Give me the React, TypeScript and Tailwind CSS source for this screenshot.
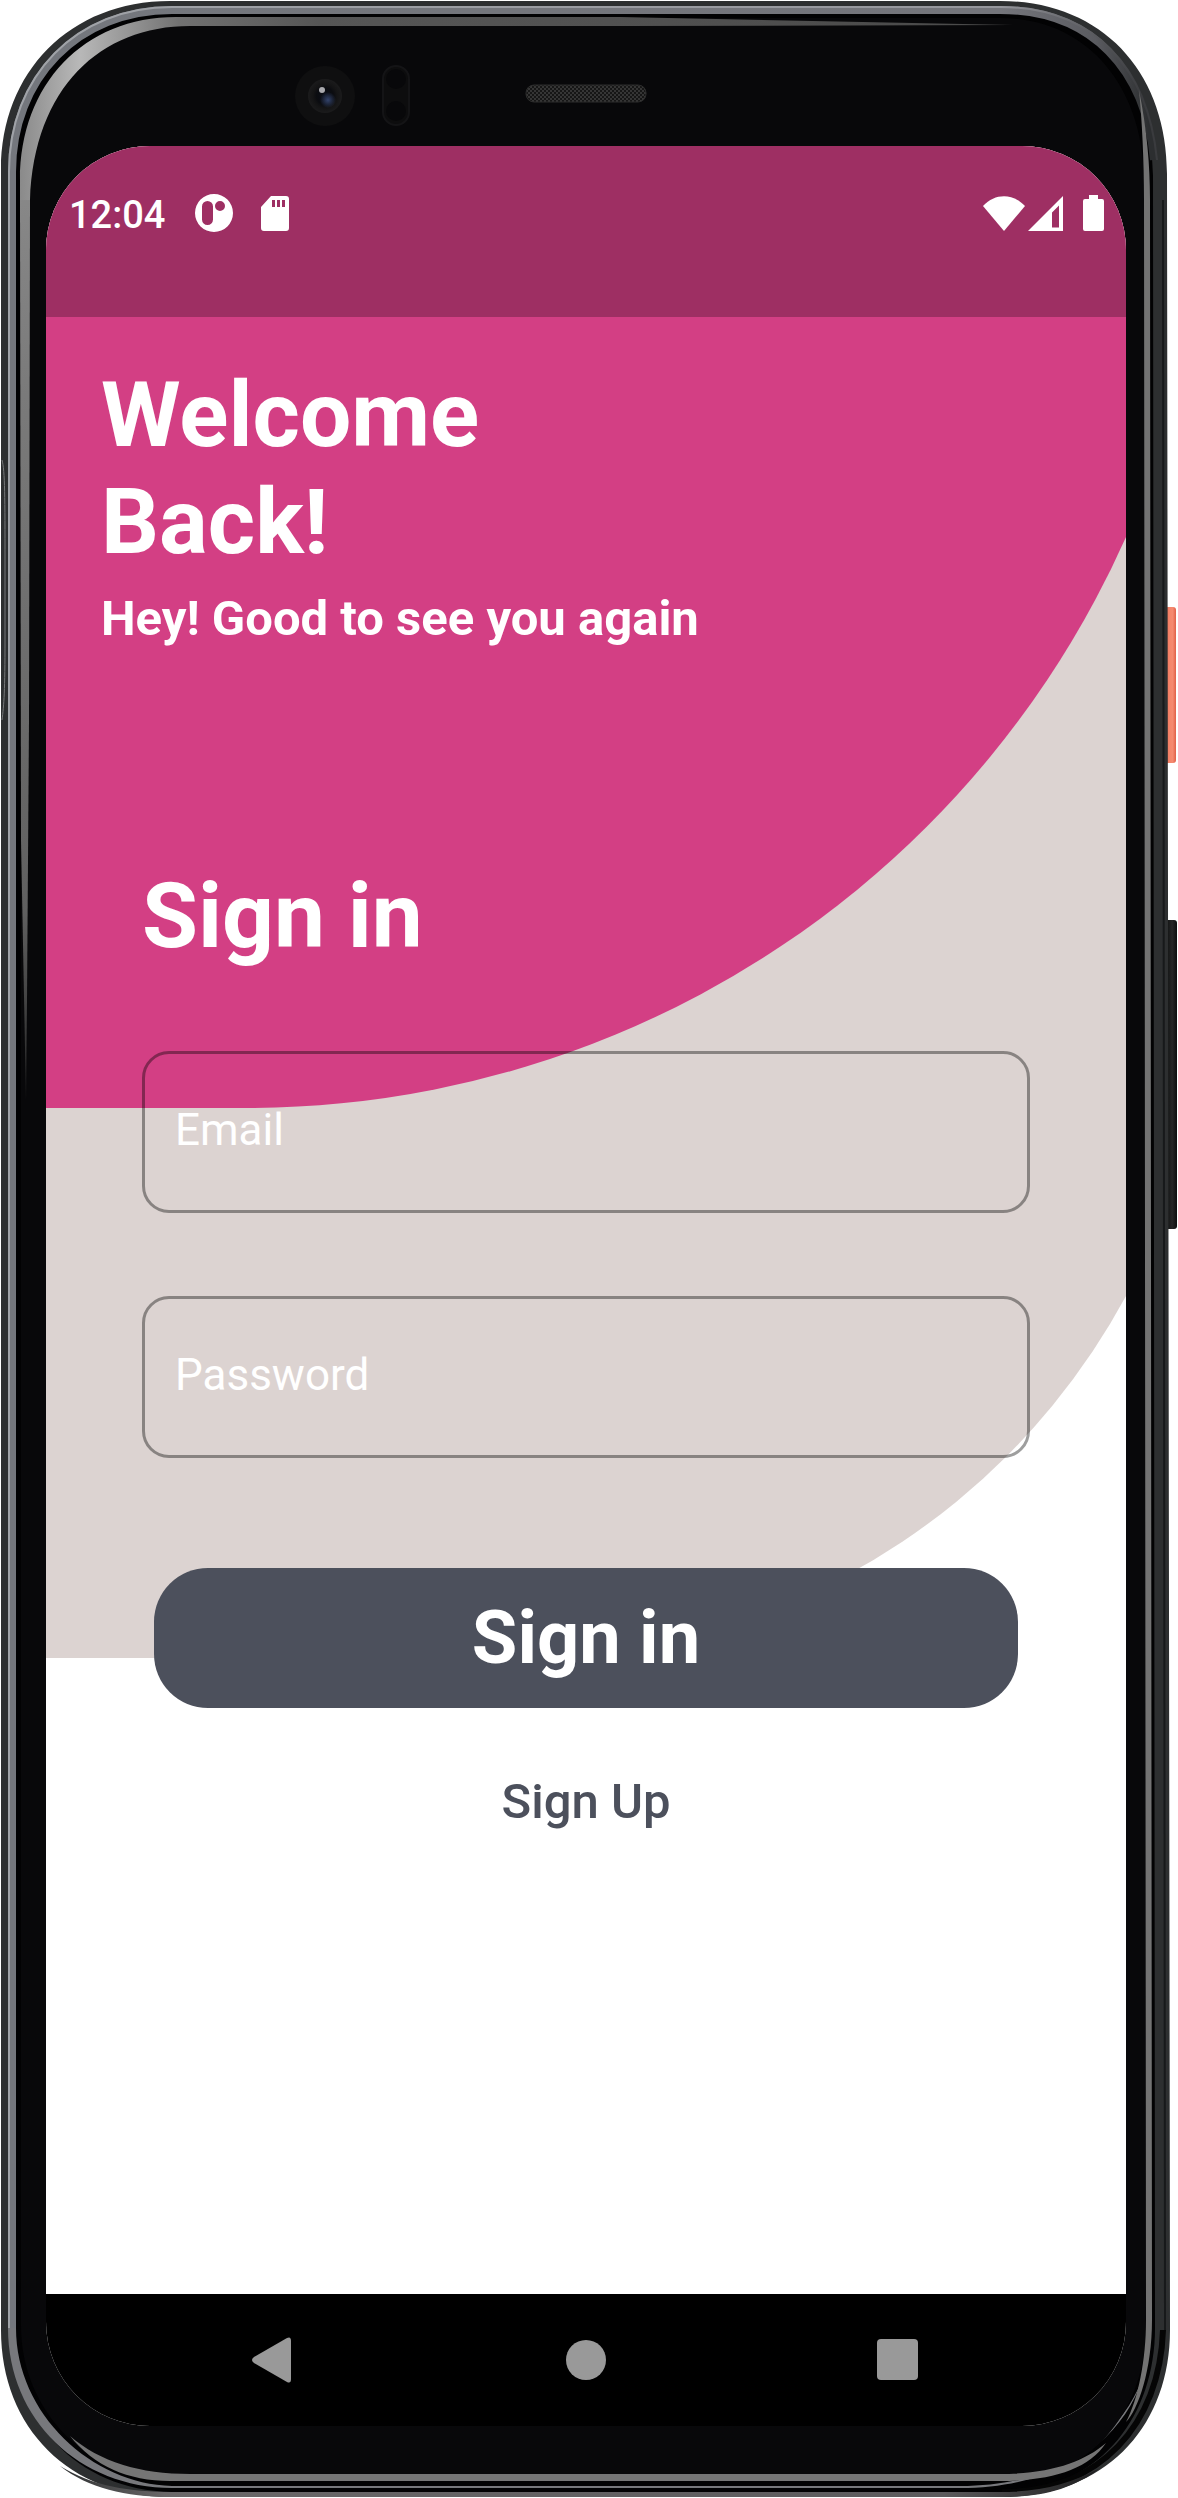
import type { ReactNode } from "react";

/** Hardware shell of the handset: rim, highlights, camera, speaker and side keys. */
function PhoneShell() {
  return (
    <svg
      className="absolute inset-0 h-full w-full"
      viewBox="0 0 1178 2498"
      preserveAspectRatio="none"
      aria-hidden="true"
    >
      <defs>
        <linearGradient id="coral" x1="0" x2="1" y1="0" y2="0">
          <stop offset="0" stopColor="#e9664d" />
          <stop offset="0.35" stopColor="#f58368" />
          <stop offset="0.7" stopColor="#f58a70" />
          <stop offset="1" stopColor="#e06048" />
        </linearGradient>
        <linearGradient id="silver" gradientUnits="userSpaceOnUse" x1="0" x2="1178" y1="0" y2="0">
          <stop offset="0" stopColor="#74777d" />
          <stop offset="0.85" stopColor="#74757b" />
          <stop offset="0.93" stopColor="#5a5b60" />
          <stop offset="0.975" stopColor="#2c2e30" />
        </linearGradient>
        <linearGradient id="silverEdge" gradientUnits="userSpaceOnUse" x1="0" x2="1178" y1="0" y2="0">
          <stop offset="0" stopColor="#a0a3a8" />
          <stop offset="0.85" stopColor="#96979d" />
          <stop offset="0.97" stopColor="#3a3b3e" />
        </linearGradient>
        <linearGradient id="topGlow" gradientUnits="userSpaceOnUse" x1="20" x2="1013" y1="0" y2="0">
          <stop offset="0" stopColor="#8a8a8a" />
          <stop offset="0.06" stopColor="#b8b8b8" />
          <stop offset="0.16" stopColor="#727272" />
          <stop offset="0.3" stopColor="#565656" />
          <stop offset="1" stopColor="#4a4a4a" />
        </linearGradient>
        <linearGradient id="sideGlow" gradientUnits="userSpaceOnUse" x1="0" x2="0" y1="160" y2="1100">
          <stop offset="0" stopColor="#8a8a8a" />
          <stop offset="0.25" stopColor="#7a7a7a" />
          <stop offset="0.8" stopColor="#606060" />
          <stop offset="1" stopColor="#222" />
        </linearGradient>
        <linearGradient id="bottomEdge" gradientUnits="userSpaceOnUse" x1="60" x2="1100" y1="0" y2="0">
          <stop offset="0" stopColor="#2d2f30" />
          <stop offset="0.1" stopColor="#6a6869" />
          <stop offset="0.85" stopColor="#5c5b5d" />
          <stop offset="1" stopColor="#1c1c1d" />
        </linearGradient>
        <linearGradient id="key" x1="0" x2="1" y1="0" y2="0">
          <stop offset="0" stopColor="#0c0d0d" />
          <stop offset="0.6" stopColor="#252626" />
          <stop offset="1" stopColor="#0d0e0e" />
        </linearGradient>
        <radialGradient id="lens" cx="0.5" cy="0.5" r="0.5">
          <stop offset="0" stopColor="#0a0e18" />
          <stop offset="0.5" stopColor="#0b0c10" />
          <stop offset="0.7" stopColor="#141415" />
          <stop offset="1" stopColor="#1b1b1c" />
        </radialGradient>
        <radialGradient id="glint" cx="0.5" cy="0.5" r="0.5">
          <stop offset="0" stopColor="#33436b" />
          <stop offset="1" stopColor="#33436b" stopOpacity="0" />
        </radialGradient>
        <pattern id="mesh" width="4" height="4" patternUnits="userSpaceOnUse">
          <rect width="4" height="4" fill="#161616" />
          <circle cx="1" cy="1" r="1" fill="#3f3f3f" />
          <circle cx="3" cy="3" r="1" fill="#3f3f3f" />
        </pattern>
      </defs>

      {/* side keys */}
      <rect x="1165" y="607" width="11" height="156" rx="3" fill="url(#coral)" />
      <rect x="1165" y="920" width="12" height="309" rx="3" fill="url(#key)" />

      {/* body */}
      <path
        d="M170 1H1000C1102 1 1167 72 1167 174L1170 2330C1170 2428 1104 2497 1002 2497H170C70 2497 1 2428 1 2330V170C1 72 70 1 170 1Z"
        fill="#2d2f30"
      />
      <path
        d="M172 10H1000C1096 10 1153 80 1153 176L1155 2328C1155 2420 1096 2492 1002 2492H172C76 2490 13 2420 13 2328V172C13 78 78 10 172 10Z"
        fill="#020203"
      />
      <path d="M1163 2330C1160 2424 1100 2492 1002 2492" fill="none" stroke="#050505" strokeWidth="6" />
      <path
        d="M60 2466C92 2486 130 2492 172 2492H1000C1040 2492 1070 2484 1100 2468C1072 2490 1040 2497 1002 2497H170C126 2497 88 2488 60 2466Z"
        fill="url(#bottomEdge)"
      />
      <path d="M1163 200L1165 2330" stroke="#17191a" strokeWidth="2" />

      {/* polished rim */}
      <path
        d="M12 2328V172C12 78 78 10 172 10H1000C1092 10 1146 70 1154 160"
        fill="none"
        stroke="url(#silver)"
        strokeWidth="8"
      />
      <path
        d="M9 2328V172C9 76 76 7 172 7H1000C1094 7 1148 68 1157 160"
        fill="none"
        stroke="url(#silverEdge)"
        strokeWidth="2"
      />
      <path
        d="M8 2328C8 2420 80 2488 172 2488H960C1060 2488 1122 2440 1142 2380C1118 2440 1056 2486 960 2486H172C92 2484 16 2414 16 2328Z"
        fill="#77787c"
      />

      {/* glass */}
      <path
        d="M176 18H1000C1090 18 1144 90 1144 180L1146 2326C1146 2412 1090 2481 1002 2481H176C90 2481 21 2412 21 2326V176C21 86 86 18 176 18Z"
        fill="#08080a"
      />

      {/* glass edge reflections */}
      <path
        d="M20 200V180C20 84 84 17 176 17H620L1013 25L620 26H190C100 26 34 88 30 200Z"
        fill="url(#topGlow)"
      />
      <path d="M20 200H30L29 720L27 1000L26 1100L21 840Z" fill="url(#sideGlow)" />
      <path
        d="M1139 90C1147 130 1150 165 1150 200L1152 2320C1152 2370 1138 2410 1126 2422C1138 2400 1146 2360 1146 2320L1144 200C1144 160 1142 120 1139 90Z"
        fill="#737373"
      />
      <path
        d="M70 2436C100 2462 140 2474 190 2474H1000C1050 2474 1084 2462 1106 2443C1088 2470 1050 2481 1000 2481H170C128 2481 94 2466 70 2436Z"
        fill="#757575"
      />
      <path d="M2 460C5 470 5 500 5 560V640C5 690 4 705 2 720" fill="none" stroke="#77797a" strokeWidth="1" />

      {/* front camera */}
      <circle cx="325" cy="96" r="30" fill="#0f0f10" />
      <circle cx="325" cy="96" r="17" fill="url(#lens)" />
      <circle cx="328" cy="100" r="8" fill="url(#glint)" />
      <circle cx="322" cy="90" r="3" fill="#a9a9ad" />

      {/* proximity sensors */}
      <rect x="383" y="66" width="26" height="59" rx="13" fill="#0d0d0e" stroke="#141416" strokeWidth="2" />
      <circle cx="396" cy="79" r="10" fill="#08080a" />
      <circle cx="396" cy="111" r="10" fill="#08080a" />

      {/* earpiece */}
      <rect x="526" y="85" width="120" height="17" rx="8" fill="url(#mesh)" stroke="#2c2c2c" strokeWidth="1" />
    </svg>
  );
}

function StatusBar() {
  return (
    <div className="flex h-[171px] items-start justify-between bg-black/25 pl-[23px] pr-[22px] pt-[47px] text-white">
      <div className="flex h-10 items-center">
        <span className="mt-1 text-[38px] font-medium leading-10">12:04</span>
        <svg className="ml-[30px] h-[38px] w-[38px]" viewBox="0 0 38 38" aria-hidden="true">
          <path
            fillRule="evenodd"
            fill="currentColor"
            d="M19 0a19 19 0 1 1 0 38a19 19 0 0 1 0-38ZM12.500 7a5.500 5.500 0 0 0-5.500 5.500v13a5.500 5.500 0 0 0 11 0v-13a5.500 5.500 0 0 0-5.500-5.500ZM25 7a5 5 0 1 0 0 10a5 5 0 0 0 0-10Z"
          />
        </svg>
        <svg className="ml-7 h-[35px] w-[28px]" viewBox="0 0 28 35" aria-hidden="true">
          <path
            fillRule="evenodd"
            fill="currentColor"
            d="M10 0H25a3 3 0 0 1 3 3V32a3 3 0 0 1-3 3H3a3 3 0 0 1-3-3V11ZM11 4V11H14V4ZM16 4V11H19V4ZM21 4V11H24V4Z"
          />
        </svg>
      </div>
      <div className="flex h-10 items-center">
        <svg className="h-[35px] w-[42px]" viewBox="0 0 42 35" aria-hidden="true">
          <path fill="currentColor" d="M0 10C12-3 30-3 42 10L21 35Z" />
        </svg>
        <svg className="ml-[3px] h-[35px] w-[35px]" viewBox="0 0 35 35" aria-hidden="true">
          <path fillRule="evenodd" fill="currentColor" d="M35 0V35H0ZM31 9.500L24 16.500V31.500H31Z" />
        </svg>
        <svg className="ml-5 h-9 w-[21px]" viewBox="0 0 21 36" aria-hidden="true">
          <path
            fill="currentColor"
            d="M6 0H15V4H19a2 2 0 0 1 2 2V34a2 2 0 0 1-2 2H2a2 2 0 0 1-2-2V6a2 2 0 0 1 2-2H6Z"
          />
        </svg>
      </div>
    </div>
  );
}

function Field({ label, type }: { label: string; type: string }) {
  return (
    <input
      type={type}
      aria-label={label}
      placeholder={label}
      className="block h-[162px] w-full rounded-[27px] border-[3px] border-black/38 bg-transparent px-[30px] pb-[5px] text-[44px] text-white outline-none placeholder:text-white placeholder:opacity-100"
    />
  );
}

function NavButton({ label, children }: { label: string; children: ReactNode }) {
  return (
    <button type="button" aria-label={label} className="flex h-full w-[312px] items-center justify-center">
      <svg className="h-[46px] w-[46px]" viewBox="0 0 46 46" fill="#999999" aria-hidden="true">
        {children}
      </svg>
    </button>
  );
}

export default function App() {
  return (
    <div className="relative flex min-h-screen w-full flex-col bg-white pb-[72px] pl-[46px] pr-[52px] pt-[146px] font-['Roboto',sans-serif]">
      <PhoneShell />
      <main className="relative flex flex-1 flex-col overflow-hidden rounded-[104px] bg-white">
        <div className="absolute left-0 top-0 -right-[83px] h-[1512px] rounded-br-[690px] bg-[#dcd3d1]" />
        <div className="absolute left-0 top-0 -right-[83px] h-[962px] rounded-br-[962px] bg-[#d33f84]" />

        <div className="relative flex flex-1 flex-col">
          <StatusBar />

          <header className="pl-[55px] pt-[45px] font-bold text-white">
            <h1 className="text-[91px] leading-[107px]">
              Welcome
              <br />
              Back!
            </h1>
            <p className="mt-[13px] text-[49px] leading-[60px]">Hey! Good to see you again</p>
          </header>

          <form className="mt-[214px] flex flex-1 flex-col px-24" onSubmit={(e) => e.preventDefault()}>
            <h2 className="text-[91px] font-bold leading-[107px] text-white">Sign in</h2>
            <div className="mt-[81px] flex flex-col gap-[83px]">
              <Field label="Email" type="email" />
              <Field label="Password" type="password" />
            </div>
            <button
              type="submit"
              className="mx-3 mt-[110px] h-[140px] rounded-[54px] bg-[#4c505c] text-[74px] font-bold leading-none text-white"
            >
              Sign in
            </button>
            <a
              href="#signup"
              className="mt-16 self-center text-[49px] font-medium leading-[60px] text-[#4c505c]"
            >
              Sign Up
            </a>
          </form>
        </div>

        <nav className="relative flex h-[132px] justify-center bg-black">
          <NavButton label="Back">
            <path d="M36 1Q40 -1 40 4V42Q40 47 36 45L3 26Q-1 23 3 20Z" />
          </NavButton>
          <NavButton label="Home">
            <circle cx="23" cy="23" r="20" />
          </NavButton>
          <NavButton label="Recent apps">
            <rect x="2" y="2" width="41" height="41" rx="4" />
          </NavButton>
        </nav>
      </main>
    </div>
  );
}
